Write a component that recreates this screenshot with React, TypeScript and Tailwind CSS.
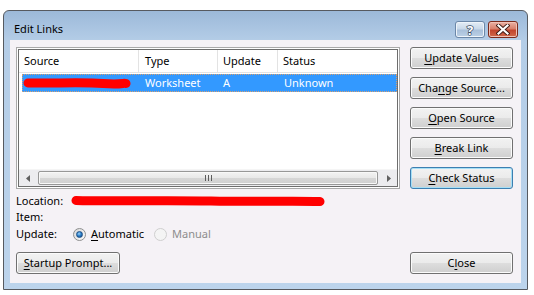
import React from 'react';

const FONT = { fontFamily: '"Noto Sans", "Open Sans", Arial, sans-serif' };

// a label with one underlined access key
function Mn({ text, k }: { text: string; k: number }) {
  return (
    <span>
      {text.slice(0, k)}
      <span className="underline underline-offset-[2px]">{text[k]}</span>
      {text.slice(k + 1)}
    </span>
  );
}

function Btn({ text, k, focus = false, w = 'w-[103px]' }: { text: string; k: number; focus?: boolean; w?: string }) {
  return (
    <div
      className={`${w} h-[22px] shrink-0 flex items-center justify-center rounded-[3px] border text-[11px] text-black bg-[linear-gradient(to_bottom,#f2f2f2_0%,#ebebeb_48%,#dddddd_52%,#cfcfcf_100%)] ${
        focus
          ? 'border-[#3c7fb1] shadow-[inset_0_0_0_1px_#a6dff6]'
          : 'border-[#707070] shadow-[inset_0_0_0_1px_#fbfbfb]'
      }`}
    >
      <Mn text={text} k={k} />
    </div>
  );
}

function Radio({ checked, disabled }: { checked?: boolean; disabled?: boolean }) {
  return (
    <div
      className={`w-[13px] h-[13px] rounded-full border flex items-center justify-center ${
        disabled
          ? 'border-[#cfcfcf] bg-[#f4f4f4]'
          : 'border-[#8e8f8f] bg-[linear-gradient(135deg,#d8d8d8,#fbfbfb)]'
      }`}
    >
      {checked && (
        <div className="w-[7px] h-[7px] rounded-full bg-[radial-gradient(circle_at_40%_35%,#9fd2f8_0%,#2e83cd_45%,#0d3f7a_100%)] border border-[#1c4f86]" />
      )}
    </div>
  );
}

// redaction marks drawn over the hidden paths
function Scribble({ w, h, d }: { w: number; h: number; d: string }) {
  return (
    <svg width={w} height={h} viewBox={`0 0 ${w} ${h}`} className="block">
      <path d={d} fill="none" stroke="#ff0000" strokeWidth={9} strokeLinecap="round" strokeLinejoin="round" />
    </svg>
  );
}

export default function App() {
  return (
    <div className="w-[534px] h-[295px] bg-white overflow-hidden" style={FONT}>
      <div className="ml-[3px] mt-[10px] w-[525px] h-[280px] rounded-t-[6px] border border-[#565a60] flex flex-col bg-[linear-gradient(to_bottom,#9cb9d9_0px,#b4cde7_30px,#bcd4ec_100%)]">
        {/* title bar */}
        <div className="h-[29px] shrink-0 flex items-start">
          <div className="pl-[10px] pt-[10px] text-[11px] leading-[15px] text-black">Edit Links</div>
          <div className="ml-auto mr-[9px] mt-[10px] flex gap-[3px]">
            <div className="w-[30px] h-[17px] rounded-[3px] border border-[#6b87a8] bg-[linear-gradient(to_bottom,#e4edf6_0%,#c9d9ea_45%,#a9c0da_55%,#bcd1e6_100%)] flex items-center justify-center shadow-[inset_0_0_0_1px_#eef4fa]">
              <svg width="16" height="15" viewBox="0 0 16 15" className="overflow-visible">
                <text x="8" y="12.5" textAnchor="middle" fontSize="13" fontWeight="bold" fill="#fff" stroke="#3c4d63" strokeWidth="1.4" paintOrder="stroke" style={FONT}>?</text>
              </svg>
            </div>
            <div className="w-[30px] h-[17px] rounded-[3px] border border-[#7b2a1c] bg-[linear-gradient(to_bottom,#eab1a4_0%,#d9806c_45%,#c2442c_55%,#d16a4c_100%)] flex items-center justify-center shadow-[inset_0_0_0_1px_#f0c2b6]">
              <svg width="14" height="11" viewBox="0 0 14 11">
                <path d="M2.5 1.5 L11.5 9.5 M11.5 1.5 L2.5 9.5" stroke="#3d1a14" strokeWidth="4" strokeLinecap="square" />
                <path d="M2.5 1.5 L11.5 9.5 M11.5 1.5 L2.5 9.5" stroke="#ffffff" strokeWidth="2.2" strokeLinecap="square" />
              </svg>
            </div>
          </div>
        </div>

        {/* client area */}
        <div className="ml-[6px] w-[511px] h-[243px] bg-[#f5f2f6] flex flex-col pl-[6px] pt-[7px] text-[11px] text-black">
          <div className="flex">
            <div className="w-[384px]">
              {/* list view */}
              <div className="h-[142px] border border-[#a9a9a9] bg-white p-[1px]">
                <div className="h-full border border-[#6e6e6e] bg-white flex flex-col">
                  <div className="h-[23px] flex border-b border-[#e3e3e3] leading-[22px]">
                    <div className="w-[120px] pl-[5px] border-r border-[#e3e3e3]">Source</div>
                    <div className="w-[79px] pl-[6px] border-r border-[#e3e3e3]">Type</div>
                    <div className="w-[60px] pl-[5px] border-r border-[#e3e3e3]">Update</div>
                    <div className="flex-1 pl-[5px]">Status</div>
                  </div>
                  <div className="mt-[1px] ml-[3px] h-[18px] flex items-center bg-[#3399ff] text-white border border-dotted border-[#d8a070]">
                    <div className="w-[116px] h-full flex items-center">
                      <Scribble w={108} h={14} d="M5 7 C 30 7.5, 60 6, 80 7.5 S 100 6.5, 103 7.5" />
                    </div>
                    <div className="w-[79px] pl-[6px]">Worksheet</div>
                    <div className="w-[60px] pl-[5px]">A</div>
                    <div className="flex-1 pl-[6px]">Unknown</div>
                  </div>
                  <div className="flex-1" />
                  {/* horizontal scrollbar */}
                  <div className="h-[17px] flex items-center bg-[#ececef] border-t border-[#f5f5f5]">
                    <div className="w-[17px] h-full flex items-center justify-center">
                      <svg width="4" height="7" viewBox="0 0 4 7"><path d="M4 0 L0 3.5 L4 7 Z" fill="#606060" /></svg>
                    </div>
                    <div className="flex-1 h-[14px] mx-[2px] rounded-[2px] border border-[#979797] bg-[linear-gradient(to_bottom,#f3f3f3_0%,#e8e8e8_50%,#d6d6d6_51%,#d0d0d0_100%)] flex items-center justify-center shadow-[inset_0_0_0_1px_#f8f8f8]">
                      <svg width="7" height="6" viewBox="0 0 7 6">
                        <path d="M0.5 0 V6 M3.5 0 V6 M6.5 0 V6" stroke="#5c5c5c" strokeWidth="1" />
                      </svg>
                    </div>
                    <div className="w-[17px] h-full flex items-center justify-center">
                      <svg width="4" height="7" viewBox="0 0 4 7"><path d="M0 0 L4 3.5 L0 7 Z" fill="#606060" /></svg>
                    </div>
                  </div>
                </div>
              </div>

              {/* details */}
              <div className="mt-[4px] h-[16px] flex items-center">
                <span className="w-[55px]">Location:</span>
                <Scribble w={254} h={14} d="M5 6.5 C 40 7.5, 90 6, 140 7 S 220 6.5, 249 7.5" />
              </div>
              <div className="h-[16px] flex items-center">Item:</div>
              <div className="mt-[1px] h-[17px] flex items-center">
                <span className="w-[57px]">Update:</span>
                <Radio checked />
                <span className="ml-[5px]"><Mn text="Automatic" k={0} /></span>
                <span className="ml-[10px]"><Radio disabled /></span>
                <span className="ml-[5px] text-[#8d8d8d]">Manual</span>
              </div>
            </div>

            <div className="ml-[10px] flex flex-col gap-[8px]">
              <Btn text="Update Values" k={0} />
              <Btn text="Change Source..." k={3} />
              <Btn text="Open Source" k={0} />
              <Btn text="Break Link" k={0} />
              <Btn text="Check Status" k={0} focus />
            </div>
          </div>

          <div className="mt-auto mb-[9px] flex pr-[8px] justify-between">
            <Btn text="Startup Prompt..." k={0} w="w-[104px]" />
            <Btn text="Close" k={1} />
          </div>
        </div>
      </div>
    </div>
  );
}
